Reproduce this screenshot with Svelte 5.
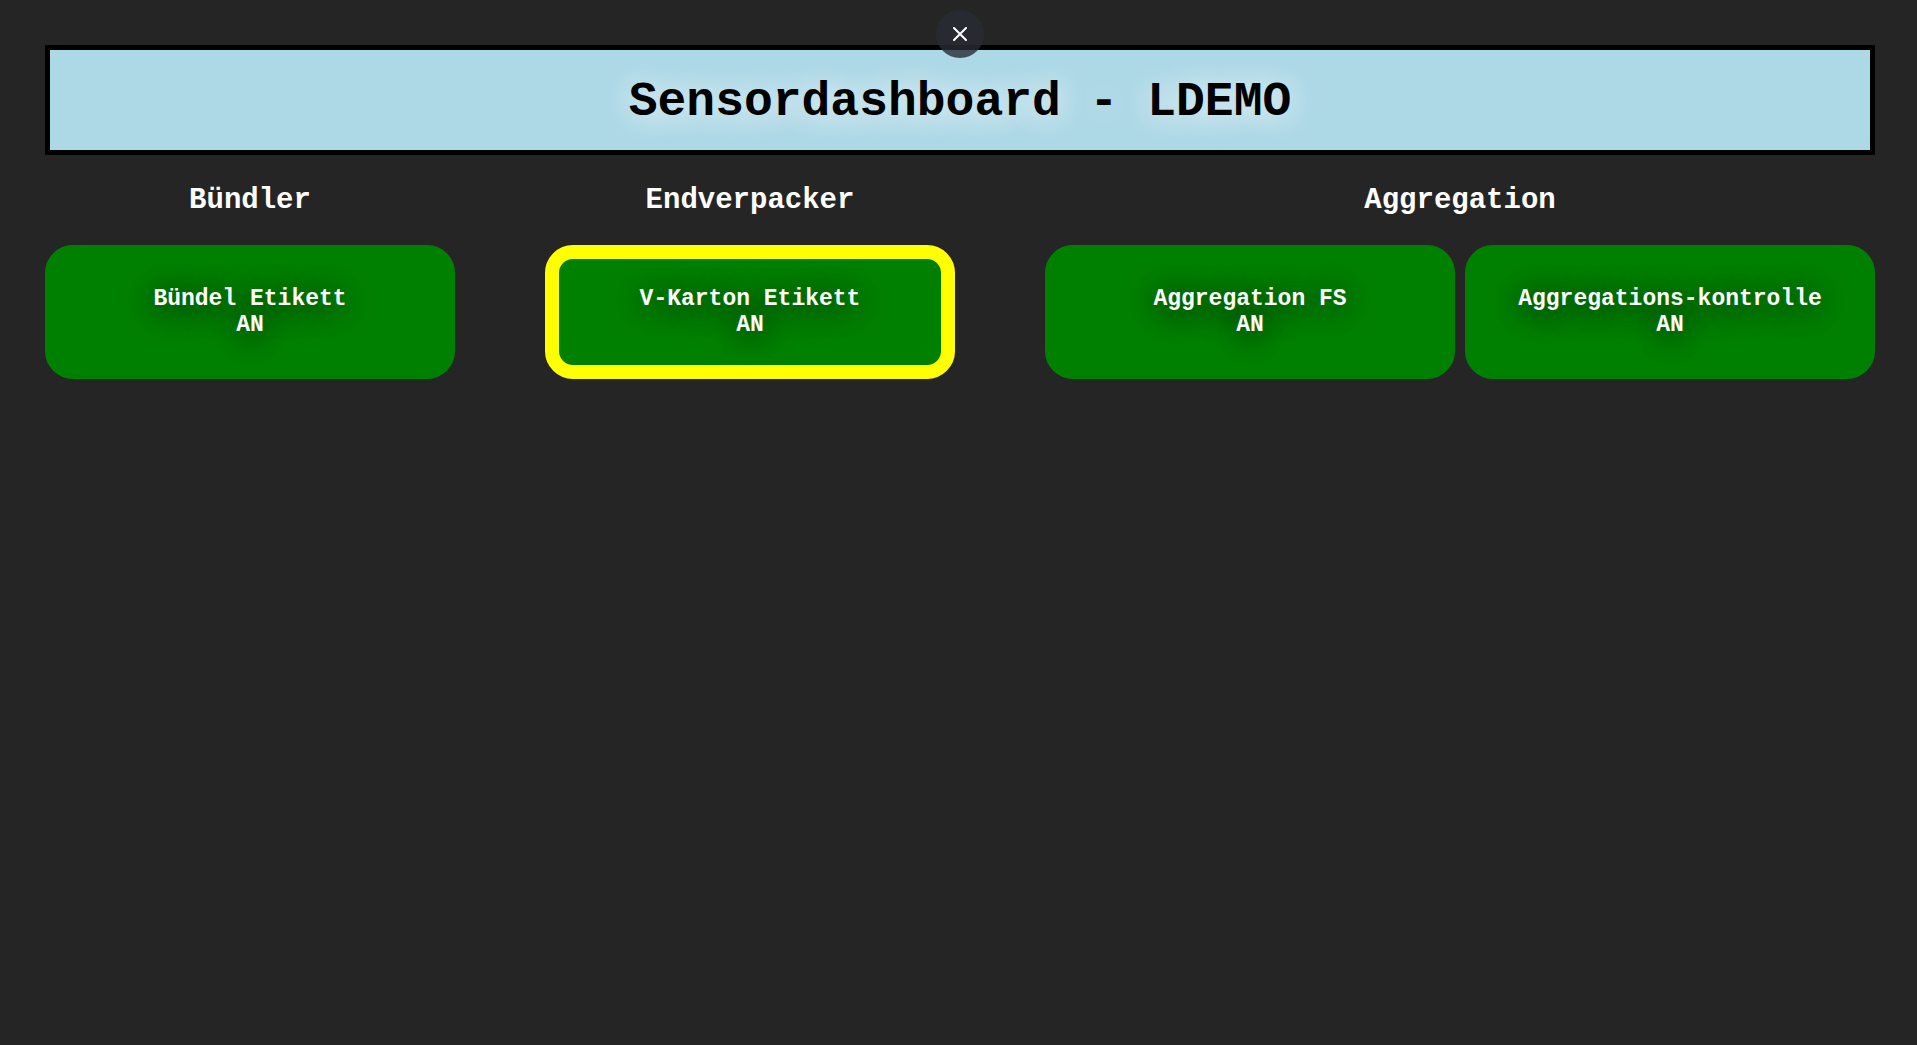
<script>
  const groups = [
    { name: 'Bündler', sensors: [{ label: 'Bündel Etikett', state: 'AN' }] },
    { name: 'Endverpacker', sensors: [{ label: 'V-Karton Etikett', state: 'AN', marked: true }] },
    {
      name: 'Aggregation',
      sensors: [
        { label: 'Aggregation FS', state: 'AN' },
        { label: 'Aggregations-kontrolle', state: 'AN' },
      ],
    },
  ];
</script>

<button class="close" type="button" aria-label="Schließen">
  <svg viewBox="0 0 14 14" width="14" height="14" aria-hidden="true">
    <path d="M1 1L13 13M13 1L1 13" fill="none" stroke="#fff" stroke-width="2" stroke-linecap="round" />
  </svg>
</button>

<main>
  <header>
    <h1>Sensordashboard - LDEMO</h1>
  </header>

  <div class="groups">
    {#each groups as group}
      <section>
        <h2>{group.name}</h2>
        <div class="sensors">
          {#each group.sensors as sensor}
            <div class="sensor" class:marked={sensor.marked}>
              <span>{sensor.label}</span>
              <span>{sensor.state}</span>
            </div>
          {/each}
        </div>
      </section>
    {/each}
  </div>
</main>

<style>
  :global(body) {
    background: #252525;
    font-family: 'Courier New', 'Liberation Mono', monospace;
  }

  main {
    padding: 45px 42px 45px 45px;
  }

  header {
    padding: 25px 20px 21px;
    border: 5px solid #000;
    background: lightblue;
    text-align: center;
  }

  h1 {
    margin: 0;
    color: #000;
    font-size: 48px;
    line-height: 54px;
    font-weight: 700;
    text-shadow: 0 2px 30px #fff;
  }

  .groups {
    display: grid;
    grid-template-columns: 410fr 410fr 830fr;
    gap: 90px;
    margin-top: 29px;
  }

  h2 {
    margin: 0 0 27px;
    color: #fff;
    font-size: 29px;
    line-height: 34px;
    font-weight: 700;
    text-align: center;
  }

  .sensors {
    display: flex;
    gap: 10px;
  }

  .sensor {
    display: flex;
    flex: 1;
    flex-direction: column;
    align-items: center;
    box-sizing: border-box;
    padding: 27px 16px;
    border: 14px solid green;
    border-radius: 28px;
    background: green;
    color: #fff;
    font-size: 23px;
    line-height: 26px;
    font-weight: 700;
    text-align: center;
    text-shadow: 0 4px 30px #000;
  }

  .marked {
    border-color: yellow;
  }

  .close {
    position: absolute;
    z-index: 1;
    top: 10px;
    left: calc(50% + 1px);
    display: flex;
    align-items: center;
    justify-content: center;
    width: 48px;
    height: 48px;
    padding: 0;
    border: 0;
    border-radius: 50%;
    background: rgba(40, 44, 52, 0.8);
    transform: translateX(-50%);
    cursor: pointer;
  }
</style>
